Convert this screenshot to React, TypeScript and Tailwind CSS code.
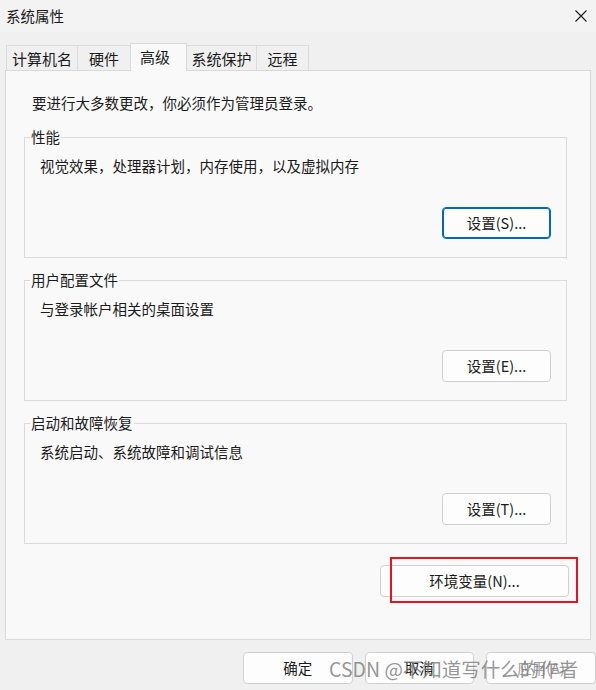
import React from 'react';

const font = { fontFamily: '"Noto Sans CJK SC", "Noto Sans", sans-serif' };

interface Group {
  title: string;
  desc: string;
  button: string;
  focused?: boolean;
}

const groups: Group[] = [
  { title: '性能', desc: '视觉效果，处理器计划，内存使用，以及虚拟内存', button: '设置(S)...', focused: true },
  { title: '用户配置文件', desc: '与登录帐户相关的桌面设置', button: '设置(E)...' },
  { title: '启动和故障恢复', desc: '系统启动、系统故障和调试信息', button: '设置(T)...' },
];

const tabs = [
  { name: '计算机名', w: 'w-[72px]' },
  { name: '硬件', w: 'w-[54px]' },
  { name: '高级', w: 'w-[57px]' },
  { name: '系统保护', w: 'w-[71px]' },
  { name: '远程', w: 'w-[53px]' },
];

const WinButton: React.FC<{ label: string; focused?: boolean; disabled?: boolean; className?: string }> = ({
  label,
  focused,
  disabled,
  className = '',
}) => (
  <button
    className={`flex h-[32px] items-center justify-center rounded-[4px] bg-[#fdfdfd] text-[14.5px] leading-[20px] ${
      focused ? 'border border-[#0067c0] shadow-[inset_0_0_0_1px_#0067c0]' : 'border border-[#d0d0d0]'
    } ${disabled ? 'text-[#a0a0a0]' : 'text-[#1a1a1a]'} ${className}`}
  >
    {label}
  </button>
);

export default function App() {
  return (
    <div className="relative h-[690px] w-[596px] overflow-hidden bg-[#f0f0f0] text-[#1a1a1a]" style={font}>
      {/* title bar */}
      <div className="flex h-[32px] items-center justify-between bg-[#f3f3f3] pl-[6px] pr-[5px]">
        <span className="text-[14.5px] leading-[20px] text-[#1a1a1a]">系统属性</span>
        <svg className="mr-[4px] h-[12px] w-[12px]" viewBox="0 0 12 12" fill="none" stroke="#1a1a1a" strokeWidth="1.1">
          <path d="M0.5 0.5L11.5 11.5M11.5 0.5L0.5 11.5" />
        </svg>
      </div>

      {/* tabs */}
      <div className="flex h-[38px] items-end pl-[6px] pt-[10px]">
        {tabs.map((t) =>
          t.name === '高级' ? (
            <div
              key={t.name}
              className={`relative z-10 -mb-px -mr-px flex h-[28px] items-start border border-b-0 border-[#d9d9d9] bg-[#f9f9f9] pl-[9px] pt-[3px] text-[15px] leading-[20px] ${t.w}`}
            >
              {t.name}
            </div>
          ) : (
            <div
              key={t.name}
              className={`-mr-px flex h-[25px] items-center justify-center border border-b-0 border-[#dcdcdc] bg-[#f0f0f0] pt-[2px] text-[15px] leading-[20px] ${t.w}`}
            >
              {t.name}
            </div>
          )
        )}
      </div>

      {/* panel */}
      <div className="mx-[5px] flex h-[570px] flex-col border border-[#d9d9d9] bg-[#f9f9f9] px-[18px]">
        <p className="pl-[8px] pt-[22px] text-[14.5px] leading-[20px]">要进行大多数更改，你必须作为管理员登录。</p>

        <div className="mt-[14px] flex flex-col gap-[12px] pr-[5px]">
          {groups.map((g) => (
            <fieldset key={g.title} className="h-[131px] border border-[#dadada] px-[15px] pb-[17px]">
              <legend className="ml-[-10px] px-[1px] text-[14.5px] leading-[20px]">{g.title}</legend>
              <p className="mt-[9px] text-[14.5px] leading-[20px]">{g.desc}</p>
              <div className="mt-[31px] flex justify-end">
                <WinButton label={g.button} focused={g.focused} className="w-[109px]" />
              </div>
            </fieldset>
          ))}
        </div>

        <div className="mt-[21px] flex justify-end pr-[3px]">
          <WinButton label="环境变量(N)..." className="w-[189px]" />
        </div>
      </div>

      {/* bottom buttons */}
      <div className="mt-[12px] flex gap-[12px] pl-[243px]">
        <WinButton label="确定" className="w-[110px]" />
        <WinButton label="取消" className="w-[110px]" />
        <WinButton label="应用(A)" disabled className="w-[110px] shrink-0" />
      </div>

      {/* red annotation */}
      <div className="absolute left-[390px] top-[557px] h-[46px] w-[188px] border-2 border-[#e8131e]" />

      {/* watermark */}
      <div className="pointer-events-none absolute left-[329px] top-[656px] whitespace-nowrap text-[19.5px] leading-[26px] text-[#7a7a7a]/80">
        CSDN @不知道写什么的作者
      </div>
    </div>
  );
}
